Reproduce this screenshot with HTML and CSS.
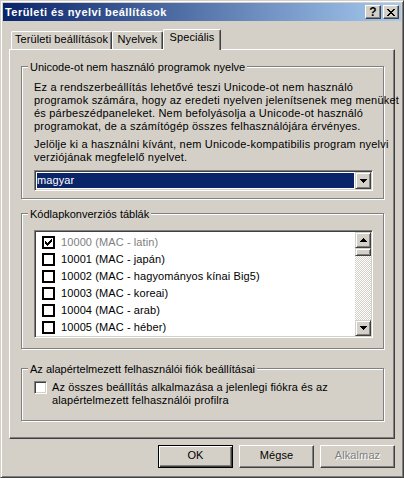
FILE: index.html
```
<!DOCTYPE html>
<html lang="hu">
<head>
<meta charset="utf-8">
<title>Területi és nyelvi beállítások</title>
<link rel="stylesheet" href="styles.css">
</head>
<body>
<div class="window">
  <div class="titlebar">
    <span class="title">Területi és nyelvi beállítások</span>
    <div class="caption-buttons">
      <div class="cap-btn help">?</div>
      <div class="cap-btn">
        <svg width="8" height="7" viewBox="0 0 8 7" shape-rendering="crispEdges"><path d="M0 0h2v1H0zM6 0h2v1H6zM1 1h2v1H1zM5 1h2v1H5zM2 2h4v1H2zM3 3h2v1H3zM2 4h4v1H2zM1 5h2v1H1zM5 5h2v1H5zM0 6h2v1H0zM6 6h2v1H6z" fill="#000"/></svg>
      </div>
    </div>
  </div>
  <div class="client">
    <div class="tabs">
      <div class="tab t1">Területi beállítások</div>
      <div class="tab t2">Nyelvek</div>
      <div class="tab active">Speciális</div>
    </div>
    <div class="panel">
      <div class="group g1">
        <span class="legend">Unicode-ot nem használó programok nyelve</span>
        <p class="para">Ez a rendszerbeállítás lehetővé teszi Unicode-ot nem használó<br>programok számára, hogy az eredeti nyelven jelenítsenek meg menüket<br>és párbeszédpaneleket. Nem befolyásolja a Unicode-ot használó<br>programokat, de a számítógép összes felhasználójára érvényes.</p>
        <p class="para p2">Jelölje ki a használni kívánt, nem Unicode-kompatibilis program nyelvi<br>verziójának megfelelő nyelvet.</p>
        <div class="combo">
          <div class="combo-field"><span class="combo-sel">magyar</span></div>
          <div class="sb-btn combo-btn">
            <svg width="7" height="4" viewBox="0 0 7 4" shape-rendering="crispEdges"><path d="M0 0h7v1H0zM1 1h5v1H1zM2 2h3v1H2zM3 3h1v1H3z" fill="#000"/></svg>
          </div>
        </div>
      </div>
      <div class="group g2">
        <span class="legend">Kódlapkonverziós táblák</span>
        <div class="listbox">
          <div class="list-items">
            <div class="item disabled"><span class="lcheck"><svg width="7" height="7" viewBox="0 0 7 7" shape-rendering="crispEdges"><path d="M6 0h1v1H6zM5 1h2v1H5zM0 2h1v1H0zM4 2h3v1H4zM0 3h2v1H0zM3 3h3v1H3zM0 4h5v1H0zM1 5h3v1H1zM2 6h1v1H2z" fill="#000"/></svg></span>10000 (MAC - latin)</div>
            <div class="item"><span class="lcheck"></span>10001 (MAC - japán)</div>
            <div class="item"><span class="lcheck"></span>10002 (MAC - hagyományos kínai Big5)</div>
            <div class="item"><span class="lcheck"></span>10003 (MAC - koreai)</div>
            <div class="item"><span class="lcheck"></span>10004 (MAC - arab)</div>
            <div class="item"><span class="lcheck"></span>10005 (MAC - héber)</div>
          </div>
          <div class="vscroll">
            <div class="sb-btn arrow">
              <svg width="7" height="4" viewBox="0 0 7 4" shape-rendering="crispEdges"><path d="M3 0h1v1H3zM2 1h3v1H2zM1 2h5v1H1zM0 3h7v1H0z" fill="#000"/></svg>
            </div>
            <div class="sb-btn thumb"></div>
            <div class="track"></div>
            <div class="sb-btn arrow">
              <svg width="7" height="4" viewBox="0 0 7 4" shape-rendering="crispEdges"><path d="M0 0h7v1H0zM1 1h5v1H1zM2 2h3v1H2zM3 3h1v1H3z" fill="#000"/></svg>
            </div>
          </div>
        </div>
      </div>
      <div class="group g3">
        <span class="legend">Az alapértelmezett felhasználói fiók beállításai</span>
        <div class="checkrow">
          <span class="check3d"></span>
          <span class="checktext">Az összes beállítás alkalmazása a jelenlegi fiókra és az<br>alapértelmezett felhasználói profilra</span>
        </div>
      </div>
    </div>
    <div class="buttons">
      <div class="btn default">OK</div>
      <div class="btn">Mégse</div>
      <div class="btn disabled">Alkalmaz</div>
    </div>
  </div>
</div>
</body>
</html>
```
FILE: styles.css
```
html, body {
  margin: 0;
  padding: 0;
  background: #D4D0C8;
}
body {
  font-family: "Liberation Sans", Arial, sans-serif;
  font-size: 11px;
  line-height: 13px;
  letter-spacing: 0.1px;
  color: #000;
}
.window {
  width: 404px;
  height: 478px;
  box-sizing: border-box;
  border: 1px solid;
  border-color: #D4D0C8 #404040 #404040 #D4D0C8;
  box-shadow: inset 1px 1px 0 #fff, inset -1px -1px 0 #808080;
  padding: 2px;
  background: #D4D0C8;
  display: flex;
  flex-direction: column;
}
.titlebar {
  height: 18px;
  display: flex;
  align-items: center;
  padding: 0 2px;
  background: linear-gradient(to right, #0A246A, #A6CAF0);
}
.title {
  flex: 1;
  color: #fff;
  font-weight: bold;
  line-height: 18px;
  letter-spacing: 0.45px;
  white-space: nowrap;
}
.caption-buttons {
  display: flex;
  gap: 2px;
}
.cap-btn {
  width: 16px;
  height: 14px;
  box-sizing: border-box;
  background: #D4D0C8;
  border: 1px solid;
  border-color: #fff #404040 #404040 #fff;
  box-shadow: inset -1px -1px 0 #808080;
  display: flex;
  align-items: center;
  justify-content: center;
}
.cap-btn.help {
  font-weight: bold;
  font-size: 12px;
  line-height: 11px;
  padding-top: 1px;
}
.client {
  flex: 1;
  padding: 8px 6px 0 6px;
  display: flex;
  flex-direction: column;
}
.tabs {
  display: flex;
  align-items: flex-end;
  height: 21px;
  margin-bottom: -1px;
  padding-left: 2px;
}
.tab {
  box-sizing: border-box;
  height: 18px;
  margin-bottom: 1px;
  border-top: 1px solid #fff;
  border-left: 1px solid #fff;
  border-right: 1px solid #404040;
  border-radius: 2px 2px 0 0;
  box-shadow: inset -1px 0 0 #808080;
  padding-top: 1px;
  text-align: center;
  white-space: nowrap;
  background: #D4D0C8;
}
.tab.t1 { width: 101px; }
.tab.t2 { width: 51px; }
.tab.active {
  width: 58px;
  height: 21px;
  margin-bottom: 0;
  padding-top: 1px;
  position: relative;
  z-index: 1;
}
.panel {
  height: 390px;
  box-sizing: border-box;
  border-top: 1px solid #fff;
  border-left: 1px solid #fff;
  border-right: 1px solid #404040;
  border-bottom: 1px solid #404040;
  box-shadow: inset -1px -1px 0 #808080;
  padding: 16px 10px 0 11px;
  display: flex;
  flex-direction: column;
}
.group {
  position: relative;
  border: 1px solid #808080;
  box-shadow: 1px 1px 0 #fff, inset 1px 1px 0 #fff;
}
.g1 { padding: 14px 10px 7px 12px; }
.g2 { padding: 16px 10px 10px 12px; margin-top: 14px; }
.g3 { padding: 12px 10px 13px 12px; margin-top: 19px; }
.legend {
  position: absolute;
  top: -6px;
  left: 6px;
  padding: 0 2px;
  background: #D4D0C8;
  white-space: nowrap;
  letter-spacing: 0;
}
.para {
  margin: 0;
  white-space: nowrap;
  letter-spacing: 0.2px;
}
.p2 { margin-top: 5px; }
.combo {
  margin-top: 6px;
  height: 21px;
  box-sizing: border-box;
  border: 1px solid;
  border-color: #808080 #fff #fff #808080;
  box-shadow: inset 1px 1px 0 #404040, inset -1px -1px 0 #D4D0C8;
  padding: 1px;
  display: flex;
  background: #fff;
}
.combo-field {
  flex: 1;
  padding: 1px;
  background: #fff;
}
.combo-sel {
  display: block;
  height: 15px;
  line-height: 15px;
  background: #0A246A;
  color: #fff;
}
.sb-btn {
  width: 16px;
  box-sizing: border-box;
  background: #D4D0C8;
  border: 1px solid;
  border-color: #D4D0C8 #404040 #404040 #D4D0C8;
  box-shadow: inset 1px 1px 0 #fff, inset -1px -1px 0 #808080;
  display: flex;
  align-items: center;
  justify-content: center;
}
.combo-btn { height: 17px; }
.listbox {
  height: 108px;
  box-sizing: border-box;
  border: 1px solid;
  border-color: #808080 #fff #fff #808080;
  box-shadow: inset 1px 1px 0 #404040, inset -1px -1px 0 #D4D0C8;
  padding: 1px;
  display: flex;
  background: #fff;
}
.list-items {
  flex: 1;
  padding-top: 2px;
  overflow: hidden;
}
.item {
  height: 17px;
  display: flex;
  align-items: center;
  gap: 6px;
  padding-left: 6px;
  white-space: nowrap;
}
.item.disabled { color: #808080; }
.lcheck {
  width: 13px;
  height: 13px;
  box-sizing: border-box;
  border: 2px solid #000;
  background: #fff;
  display: flex;
  align-items: center;
  justify-content: center;
  flex: none;
}
.vscroll {
  width: 16px;
  display: flex;
  flex-direction: column;
}
.arrow { height: 16px; }
.thumb { height: 8px; }
.track {
  flex: 1;
  background-image: repeating-conic-gradient(#fff 0 25%, #D4D0C8 0 50%);
  background-size: 2px 2px;
}
.checkrow {
  display: flex;
  align-items: flex-start;
  gap: 5px;
}
.check3d {
  width: 13px;
  height: 13px;
  box-sizing: border-box;
  border: 1px solid;
  border-color: #808080 #fff #fff #808080;
  box-shadow: inset 1px 1px 0 #404040, inset -1px -1px 0 #D4D0C8;
  background: #fff;
  flex: none;
}
.checktext { white-space: nowrap; }
.buttons {
  display: flex;
  justify-content: flex-end;
  gap: 6px;
  margin-top: 6px;
}
.btn {
  width: 75px;
  height: 23px;
  box-sizing: border-box;
  border: 1px solid;
  border-color: #fff #404040 #404040 #fff;
  box-shadow: inset -1px -1px 0 #808080;
  background: #D4D0C8;
  display: flex;
  align-items: center;
  justify-content: center;
  padding-bottom: 2px;
}
.btn.default {
  border-color: #000;
  box-shadow: inset 1px 1px 0 #fff, inset -1px -1px 0 #404040, inset -2px -2px 0 #808080;
}
.btn.disabled {
  color: #808080;
  text-shadow: 1px 1px 0 #fff;
}
```
